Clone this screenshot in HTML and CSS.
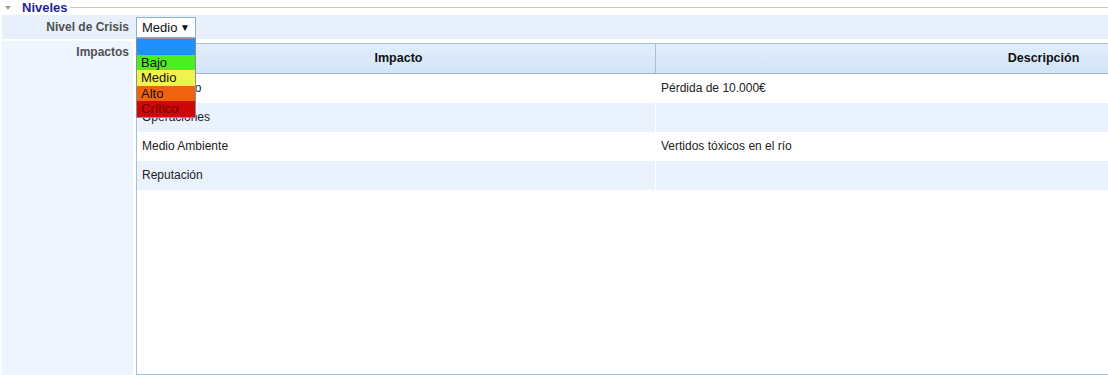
FILE: index.html
```html
<!DOCTYPE html>
<html lang="es">
<head>
  <meta charset="UTF-8">
  <title>Niveles</title>
  <link rel="stylesheet" href="styles.css">
</head>
<body>
  <div class="panel">
    <div class="legend">
      <span class="toggle"></span>
      <span class="legend-title">Niveles</span>
      <span class="legend-line"></span>
    </div>

    <div class="field-row crisis-row">
      <div class="field-label">Nivel de Crisis</div>
      <div class="field-value">
        <div class="select-wrap">
          <div class="select">
            <span>Medio</span>
            <span class="arrow">&#9660;</span>
          </div>
          <ul class="options">
            <li class="opt-none"></li>
            <li class="opt-bajo">Bajo</li>
            <li class="opt-medio">Medio</li>
            <li class="opt-alto">Alto</li>
            <li class="opt-critico">Crítico</li>
          </ul>
        </div>
      </div>
    </div>

    <div class="field-row impact-row">
      <div class="field-label">Impactos</div>
      <div class="field-value">
        <div class="grid">
          <div class="grid-head">
            <div class="cell col-impacto">Impacto</div>
            <div class="cell col-desc">Descripción</div>
          </div>
          <div class="grid-row">
            <div class="cell col-impacto">Económico</div>
            <div class="cell col-desc">Pérdida de 10.000€</div>
          </div>
          <div class="grid-row alt">
            <div class="cell col-impacto">Operaciones</div>
            <div class="cell col-desc"></div>
          </div>
          <div class="grid-row">
            <div class="cell col-impacto">Medio Ambiente</div>
            <div class="cell col-desc">Vertidos tóxicos en el río</div>
          </div>
          <div class="grid-row alt">
            <div class="cell col-impacto">Reputación</div>
            <div class="cell col-desc"></div>
          </div>
        </div>
      </div>
    </div>
  </div>
</body>
</html>
```

FILE: styles.css
```css
body {
  margin: 0;
  font-family: "Liberation Sans", Arial, sans-serif;
  font-size: 12px;
  color: #222;
  background: #fff;
  overflow: hidden;
}

.panel {
  width: 1108px;
  height: 375px;
  overflow: hidden;
}

.legend {
  display: flex;
  align-items: center;
  height: 14px;
  padding-left: 5px;
}

.toggle {
  width: 0;
  height: 0;
  border-left: 3px solid transparent;
  border-right: 3px solid transparent;
  border-top: 4px solid #a0a0a0;
  margin-right: 11px;
  margin-top: 1px;
}

.legend-title {
  font-weight: bold;
  font-size: 13px;
  color: #1f1f9c;
  margin-right: 2px;
}

.legend-line {
  flex: 1;
  height: 1px;
  background: #c8c8c8;
}

.field-row {
  display: flex;
  margin-left: 2px;
}

.crisis-row {
  margin-top: 1px;
  height: 24px;
  background: #e8f0fb;
}

.impact-row {
  margin-top: 2px;
  height: 400px;
}

.field-label {
  flex-shrink: 0;
  width: 127px;
  padding-right: 4px;
  text-align: right;
  font-weight: bold;
  color: #505050;
  line-height: 24px;
}

.impact-row .field-label {
  background: #eef5fe;
  line-height: 22px;
}

.field-value {
  flex: 1;
  min-width: 0;
  padding-left: 3px;
  padding-top: 2px;
}

.select-wrap {
  position: relative;
  width: 60px;
}

.select {
  display: flex;
  justify-content: space-between;
  align-items: center;
  box-sizing: border-box;
  height: 21px;
  padding: 0 5px;
  background: #fff;
  border: 1px solid #8fb0d4;
  font-size: 13px;
  color: #111;
}

.arrow {
  font-size: 10px;
  color: #111;
}

.options {
  position: absolute;
  top: 21px;
  left: 0;
  width: 60px;
  box-sizing: border-box;
  margin: 0;
  padding: 0;
  list-style: none;
  border: 1px solid #8a8a9a;
  font-size: 13px;
  z-index: 2;
}

.options li {
  height: 15.6px;
  line-height: 15px;
  padding-left: 4px;
  color: #111;
}

.opt-none { background: #1e90ff; }
.opt-bajo { background: #4cee20; }
.opt-medio { background: #f2f24c; }
.opt-alto { background: #f0620e; }
.opt-critico { background: #cc0808; color: #700 !important; }

.grid {
  width: 1300px;
  height: 331px;
  border-left: 1px solid #a9bfd3;
  border-bottom: 1px solid #a9bfd3;
  background: #fff;
}

.grid-head {
  display: flex;
  height: 29px;
  border-top: 1px solid #a9bfd3;
  border-bottom: 1px solid #9db6cf;
  background: linear-gradient(#e1edfc, #d3e4f8);
  font-weight: bold;
  color: #111;
}

.grid-head .cell {
  text-align: center;
  line-height: 29px;
  font-size: 12.5px;
}

.grid-head .col-impacto {
  border-right: 1px solid #a9bfd3;
}

.grid-row {
  display: flex;
  height: 29px;
  line-height: 29px;
}

.grid-row.alt {
  background: #eaf2fd;
}

.cell {
  box-sizing: border-box;
  padding-left: 5px;
  white-space: nowrap;
  flex-shrink: 0;
}

.col-impacto {
  width: 519px;
  border-right: 1px solid #fff;
}

.col-desc {
  width: 770px;
}
```
